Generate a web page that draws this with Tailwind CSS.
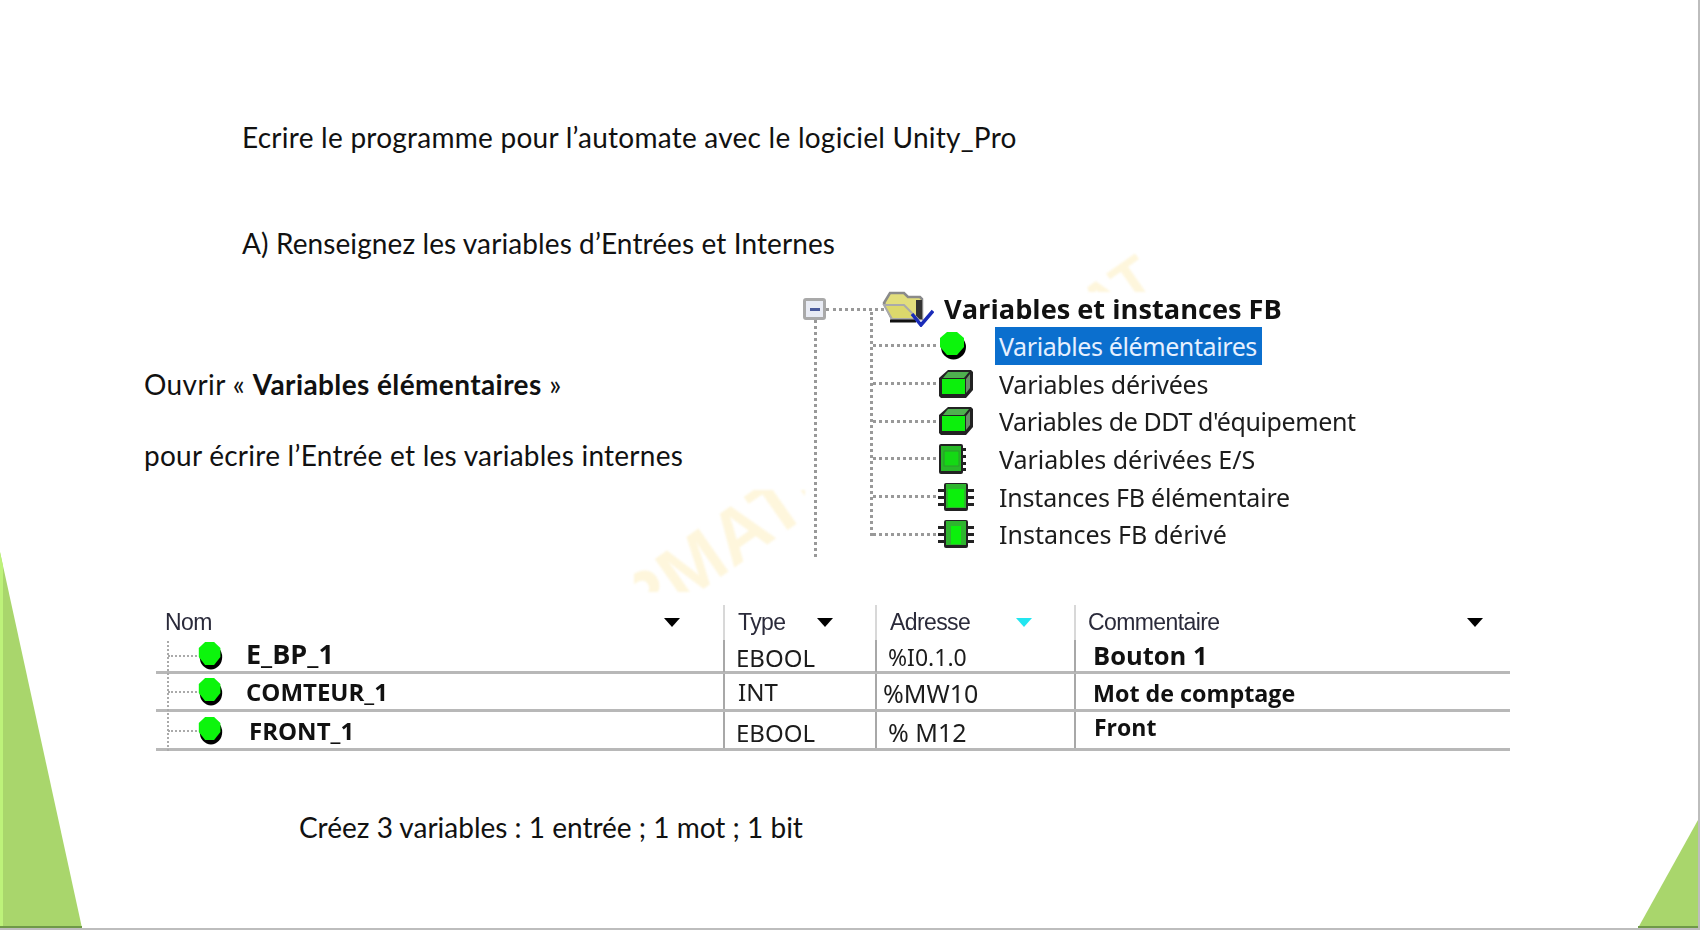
<!DOCTYPE html>
<html lang="fr">
<head>
    <meta charset="UTF-8">
    <title>Unity Pro - variables</title>
    <script src="https://cdn.jsdelivr.net/npm/@tailwindcss/browser@4"></script>
</head>
<body class="bg-white">
<svg class="hidden">
    <symbol id="dot" viewBox="0 0 30 30" preserveAspectRatio="none">
        <circle cx="15.5" cy="16" r="12.5" fill="#000"/>
        <path d="M9 1h10l7 6v9l-7 8H9l-7-8V7z" fill="#0cf50c"/>
    </symbol>
    <symbol id="cube" viewBox="0 0 36 30">
        <path d="M10 1h23l2 2v18l-7 8H3l-2-2V9z" fill="#222"/>
        <path d="M10 3h21l-5 6H5z" fill="#4fb04f"/>
        <path d="M28 10l4-5v14l-4 5z" fill="#6a8f6a"/>
        <rect x="4" y="10" width="23" height="15" fill="#0cf00c"/>
    </symbol>
    <symbol id="book" viewBox="0 0 36 30">
        <rect x="1" y="0" width="24" height="30" rx="2" fill="#222"/>
        <rect x="3" y="2" width="20" height="25" fill="#28b828"/>
        <rect x="6" y="7" width="15" height="15" fill="#14d914" stroke="#2b9a2b"/>
        <path d="M25 4h3v3h-3zM25 11h3v3h-3zM25 18h3v3h-3zM25 24h3v3h-3z" fill="#222"/>
    </symbol>
    <symbol id="chip" viewBox="0 0 36 30">
        <path d="M0 7h7v3H0zM0 14h7v3H0zM0 21h7v3H0zM29 7h7v3h-7zM29 14h7v3h-7zM29 21h7v3h-7z" fill="#222"/>
        <rect x="6" y="1" width="24" height="28" rx="2" fill="#222"/>
        <rect x="8" y="2" width="20" height="24" fill="#2fb52f"/>
        <rect x="10" y="7" width="16" height="18" fill="#0cf00c"/>
    </symbol>
    <symbol id="chip2" viewBox="0 0 36 30">
        <path d="M0 7h7v3H0zM0 14h7v3H0zM0 21h7v3H0zM29 7h7v3h-7zM29 14h7v3h-7zM29 21h7v3h-7z" fill="#222"/>
        <rect x="6" y="1" width="24" height="28" rx="2" fill="#222"/>
        <rect x="8" y="2" width="20" height="24" fill="#2fb52f"/>
        <rect x="13" y="7" width="10" height="18" fill="#0cf00c"/>
    </symbol>
</svg>

<main class="relative flex h-[930px] w-[1700px] flex-col overflow-hidden border-r-2 border-b-2 border-[#bdbdbd] bg-white font-['Lato',sans-serif] text-[28px] leading-[38px] tracking-[0.25px] text-[#111]">
    <!-- slide decoration and watermark -->
    <svg class="absolute top-0 left-0 h-[930px] w-[1700px]" viewBox="0 0 1700 930">
        <path d="M0 552L82 928H0z" fill="#a9d66c"/>
        <path d="M0 552L3 566V928H0z" fill="#bdf27a"/>
        <path d="M1698 820V928H1638z" fill="#a9d66c"/>
        <path d="M0 926H82V928H0zM1638 926H1698V928H1638z" fill="#6f9a48"/>
    </svg>
    <div class="absolute top-[490px] left-[634px] h-[102px] w-[171px] overflow-hidden blur-[1px]">
        <p class="mt-[87px] ml-[-13px] origin-left rotate-[-35deg] font-['Liberation_Sans',sans-serif] text-[76px] leading-[76px] font-bold tracking-normal whitespace-nowrap text-[#fef6dc]">RMATI</p>
    </div>
    <div class="absolute top-[244px] left-[1080px] h-[48px] w-[90px] overflow-hidden blur-[1px]">
        <p class="mt-[40px] ml-[6px] origin-left rotate-[-35deg] font-['Liberation_Sans',sans-serif] text-[60px] leading-[60px] font-bold tracking-normal whitespace-nowrap text-[#fef6dc]">AT</p>
    </div>

    <p class="relative mt-[118px] pl-[242px]">Ecrire le programme pour l’automate avec le logiciel Unity_Pro</p>
    <p class="relative mt-[68px] pl-[242px] tracking-[0.1px]">A) Renseignez les variables d’Entrées et Internes</p>

    <section class="relative mt-[31px] flex h-[310px]">
        <div class="w-[803px] pt-[72px] pl-[144px]">
            <p class="tracking-[0.4px]">Ouvrir « <b>Variables élémentaires</b> »</p>
            <p class="mt-[33px]">pour écrire l’Entrée et les variables internes</p>
        </div>

        <!-- project browser tree -->
        <div class="relative h-[264px] w-[600px] font-['Noto_Sans',sans-serif] text-[25px] leading-[34px] tracking-[-0.4px] text-[#1c1c1c] blur-[0.5px]">
            <span class="absolute top-[27px] left-[11px] h-[237px] border-l-[3px] border-dotted border-[#999]"></span>
            <span class="absolute top-[19px] left-[67px] h-[224px] border-l-[3px] border-dotted border-[#999]"></span>
            <div class="flex h-[34px] items-center pb-[2px]">
                <span class="flex h-[22px] w-[23px] items-center justify-center rounded-[3px] border-[3px] border-[#a9a9a9] bg-[#e8ebf4]"><span class="h-[3px] w-[10px] bg-[#4a5a9a]"></span></span>
                <span class="w-[58px] border-t-[3px] border-dotted border-[#999]"></span>
                <svg class="ml-[-2px] h-[36px] w-[52px] shrink-0" viewBox="0 0 52 36">
                    <path d="M2 12L8 2h14l4 4h12l2 2v20H10z" fill="#e2de7c" stroke="#8a8a8a" stroke-width="2.5"/>
                    <path d="M34 9h6v19h-6z" fill="#333"/>
                    <path d="M2 14h20l14 14H10z" fill="#dcd86c" stroke="#aaa" stroke-width="2"/>
                    <path d="M8 30h26" stroke="#111" stroke-width="3"/>
                    <path d="M30 23l9 11 12-14" fill="none" stroke="#1a2bb8" stroke-width="3.5"/>
                </svg>
                <span class="ml-[10px] font-['Open_Sans',sans-serif] text-[27.2px] font-bold tracking-normal whitespace-nowrap text-[#111]">Variables et instances FB</span>
            </div>
            <div class="flex h-[37.7px] items-center pl-[70px]">
                <span class="w-[63px] border-t-[3px] border-dotted border-[#999]"></span>
                <svg class="ml-[2px] h-[30px] w-[30px] shrink-0"><use href="#dot"/></svg>
                <span class="ml-[27px] bg-[#0b6fce] pr-[5px] pl-[4px] leading-[38px] text-[#e6f0ff]">Variables élémentaires</span>
            </div>
            <div class="flex h-[37.7px] items-center pl-[70px]">
                <span class="w-[63px] border-t-[3px] border-dotted border-[#999]"></span>
                <svg class="ml-[2px] h-[30px] w-[36px] shrink-0"><use href="#cube"/></svg>
                <span class="ml-[25px] tracking-[-0.2px]">Variables dérivées</span>
            </div>
            <div class="flex h-[37.7px] items-center pl-[70px]">
                <span class="w-[63px] border-t-[3px] border-dotted border-[#999]"></span>
                <svg class="ml-[2px] h-[30px] w-[36px] shrink-0"><use href="#cube"/></svg>
                <span class="ml-[25px]">Variables de DDT d'équipement</span>
            </div>
            <div class="flex h-[37.7px] items-center pl-[70px]">
                <span class="w-[63px] border-t-[3px] border-dotted border-[#999]"></span>
                <svg class="ml-[2px] h-[30px] w-[36px] shrink-0"><use href="#book"/></svg>
                <span class="ml-[25px] tracking-normal">Variables dérivées E/S</span>
            </div>
            <div class="flex h-[37.7px] items-center pl-[70px]">
                <span class="w-[63px] border-t-[3px] border-dotted border-[#999]"></span>
                <svg class="ml-[2px] h-[30px] w-[36px] shrink-0"><use href="#chip"/></svg>
                <span class="ml-[25px] tracking-[-0.2px]">Instances FB élémentaire</span>
            </div>
            <div class="flex h-[37.7px] items-center pl-[70px]">
                <span class="w-[63px] border-t-[3px] border-dotted border-[#999]"></span>
                <svg class="ml-[2px] h-[30px] w-[36px] shrink-0"><use href="#chip2"/></svg>
                <span class="ml-[25px] tracking-normal">Instances FB dérivé</span>
            </div>
        </div>
    </section>

    <!-- variables table -->
    <section class="relative ml-[156px] w-[1354px] font-['Noto_Sans',sans-serif] text-[24px] leading-none tracking-normal text-[#1c1c1c] blur-[0.4px]">
        <span class="absolute top-[38px] left-[11px] h-[110px] border-l-2 border-dotted border-[#aaa]"></span>
        <div class="grid h-[37px] grid-cols-[567px_152px_199px_436px] items-center pt-[2px] font-['Liberation_Sans',sans-serif] text-[23px] tracking-[-0.6px] text-[#2a2a3a]">
            <div class="flex h-full items-center justify-between pr-[43px] pl-[9px]">Nom <span class="h-0 w-0 border-x-[8px] border-t-[9px] border-x-transparent border-t-black"></span></div>
            <div class="flex h-full items-center border-l-2 border-[#d8d8d8] pl-[13px]">Type <span class="ml-[32px] h-0 w-0 border-x-[8px] border-t-[9px] border-x-transparent border-t-black"></span></div>
            <div class="flex h-full items-center border-l-2 border-[#d8d8d8] pl-[13px]">Adresse <span class="ml-[46px] h-0 w-0 border-x-[8px] border-t-[9px] border-x-transparent border-t-[#22e6f0]"></span></div>
            <div class="flex h-full items-center justify-between border-l-2 border-[#d8d8d8] pr-[27px] pl-[12px]">Commentaire <span class="h-0 w-0 border-x-[8px] border-t-[9px] border-x-transparent border-t-black"></span></div>
        </div>
        <div class="grid h-[34px] grid-cols-[567px_152px_199px_436px] items-stretch border-b-[3px] border-[#b8b8b8]">
            <div class="flex items-center pl-[12px]">
                <span class="w-[29px] border-t-2 border-dotted border-[#aaa]"></span>
                <svg class="h-[30px] w-[27px] shrink-0"><use href="#dot"/></svg>
                <b class="mb-[5px] ml-[22px] font-['Open_Sans',sans-serif] text-[27px] font-bold text-[#111]">E_BP_1</b>
            </div>
            <div class="flex items-center border-l-2 border-[#a8a8a8] pt-[3px] pl-[11px]">EBOOL</div>
            <div class="flex items-center border-l-2 border-[#a8a8a8] pt-[3px] pl-[11px] text-[23px]">%I0.1.0</div>
            <div class="flex items-center border-l-2 border-[#a8a8a8] pl-[17px] font-['Open_Sans',sans-serif] text-[25.5px] font-bold text-[#111]">Bouton 1</div>
        </div>
        <div class="grid h-[38px] grid-cols-[567px_152px_199px_436px] items-stretch border-b-[3px] border-[#b8b8b8]">
            <div class="flex items-center pl-[12px]">
                <span class="w-[29px] border-t-2 border-dotted border-[#aaa]"></span>
                <svg class="h-[30px] w-[27px] shrink-0"><use href="#dot"/></svg>
                <b class="ml-[22px] font-['Open_Sans',sans-serif] text-[24px] font-bold text-[#111]">COMTEUR_1</b>
            </div>
            <div class="flex items-center border-l-2 border-[#a8a8a8] pl-[13px]">INT</div>
            <div class="flex items-center border-l-2 border-[#a8a8a8] pt-[3px] pl-[6px] text-[25px]">%MW10</div>
            <div class="flex items-center border-l-2 border-[#a8a8a8] pt-[5px] pl-[17px] font-['Open_Sans',sans-serif] text-[23.3px] font-bold text-[#111]">Mot de comptage</div>
        </div>
        <div class="grid h-[39px] grid-cols-[567px_152px_199px_436px] items-stretch border-b-[3px] border-[#b8b8b8]">
            <div class="flex items-center pt-[2px] pl-[12px]">
                <span class="w-[29px] border-t-2 border-dotted border-[#aaa]"></span>
                <svg class="h-[30px] w-[27px] shrink-0"><use href="#dot"/></svg>
                <b class="ml-[25px] font-['Open_Sans',sans-serif] text-[24px] font-bold text-[#111]">FRONT_1</b>
            </div>
            <div class="flex items-center border-l-2 border-[#a8a8a8] pt-[6px] pl-[11px]">EBOOL</div>
            <div class="flex items-center border-l-2 border-[#a8a8a8] pt-[4px] pl-[11px] text-[25px]">% M12</div>
            <div class="flex items-center border-l-2 border-[#a8a8a8] pb-[6px] pl-[18px] font-['Open_Sans',sans-serif] text-[23px] font-bold text-[#111]">Front</div>
        </div>
    </section>

    <p class="relative mt-[57px] pl-[299px] tracking-normal">Créez 3 variables : 1 entrée ; 1 mot ; 1 bit</p>
</main>
</body>
</html>
